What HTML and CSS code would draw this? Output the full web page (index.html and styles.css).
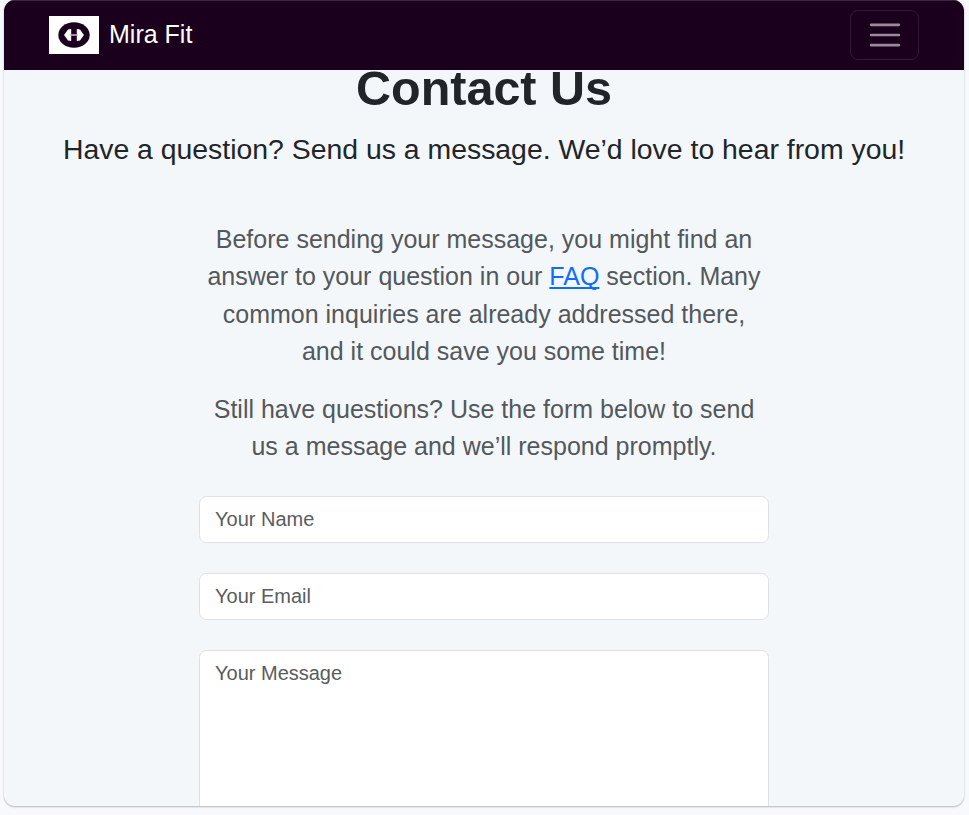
FILE: index.html
```html
<!DOCTYPE html>
<html lang="en">
<head>
<meta charset="utf-8">
<title>Mira Fit</title>
<link rel="stylesheet" href="styles.css">
</head>
<body>
<div class="window">
  <nav class="navbar">
    <a class="brand">
      <svg class="logo" viewBox="0 0 50 38" aria-hidden="true">
        <rect width="50" height="38" fill="#fff"/>
        <ellipse cx="25" cy="19" rx="15.7" ry="12.8" fill="#1b001e"/>
        <path fill="#fff" d="M15 19l1.500-2 2.500-3.500 3.200-.5v12l-3.200-.5-2.500-3.500zM35 19l-1.500-2-2.500-3.500-3.200-.5v12l3.200-.5 2.500-3.500z"/>
        <path d="M21 19h8" stroke="#c9bfca" stroke-width="1.500"/>
      </svg>
      <span>Mira Fit</span>
    </a>
    <button class="toggler" aria-label="Menu">
      <svg viewBox="0 0 30 30" aria-hidden="true"><path stroke="#fff" stroke-opacity=".55" stroke-linecap="round" stroke-miterlimit="10" stroke-width="2" d="M4 7h22M4 15h22M4 23h22"/></svg>
    </button>
  </nav>
  <main class="page">
    <h1>Contact Us</h1>
    <p class="subtitle">Have a question? Send us a message. We’d love to hear from you!</p>
    <div class="intro">
      <p>Before sending your message, you might find an<br>answer to your question in our <a href="#">FAQ</a> section. Many<br>common inquiries are already addressed there,<br>and it could save you some time!</p>
      <p>Still have questions? Use the form below to send<br>us a message and we’ll respond promptly.</p>
    </div>
    <form class="form">
      <input type="text" placeholder="Your Name">
      <input type="email" placeholder="Your Email">
      <textarea placeholder="Your Message"></textarea>
    </form>
  </main>
</div>
</body>
</html>
```
FILE: styles.css
```css
* { box-sizing: border-box; }
body {
  margin: 0;
  height: 815px;
  overflow: hidden;
  padding: 0 5px 8px 4px;
  background: #f8f9fd;
  font-family: "Liberation Sans", Arial, sans-serif;
  color: #212529;
}
.window {
  height: 806px;
  overflow: hidden;
  border-radius: 11px;
  background: #f3f7fa;
  box-shadow: 0 1px 2px rgba(0, 0, 0, .28);
}
.navbar {
  height: 70px;
  padding: 0 45px;
  display: flex;
  align-items: center;
  justify-content: space-between;
  background: #1b001e;
  box-shadow: inset 0 1px #3c2540;
}
.brand {
  display: flex;
  align-items: center;
  gap: 10px;
  color: #fff;
  font-size: 25px;
}
.brand span { padding-bottom: 2px; }
.logo { width: 50px; height: 38px; display: block; }
.toggler {
  width: 69px;
  height: 50px;
  padding: 0;
  display: grid;
  place-items: center;
  background: transparent;
  border: 1px solid #321a35;
  border-radius: 8px;
}
.toggler svg { width: 38px; height: 38px; fill: none; }
.page { text-align: center; }
h1 {
  margin: -12px 0 0;
  font-size: 48.500px;
  line-height: 60px;
}
.subtitle {
  margin: 11px 0 0;
  font-size: 28.400px;
  line-height: 40px;
  white-space: nowrap;
}
.intro {
  margin: 51.750px 0 0;
  font-size: 25px;
  line-height: 37.500px;
  color: #54585c;
  white-space: nowrap;
}
.intro p { margin: 0 0 20px; }
.intro a { color: #0d6efd; text-decoration-skip-ink: none; }
.form {
  width: 570px;
  margin: 30.250px auto 0;
  display: flex;
  flex-direction: column;
  gap: 30px;
}
.form input, .form textarea {
  display: block;
  width: 100%;
  height: 47px;
  padding: 7.500px 15px;
  border: 1px solid #dee2e6;
  border-radius: 7.500px;
  background: #fff;
  font: 20px/30px "Liberation Sans", Arial, sans-serif;
}
.form textarea { height: 200px; padding-top: 7px; resize: none; flex: none; }
::placeholder { color: #595c5f; opacity: 1; }
```
